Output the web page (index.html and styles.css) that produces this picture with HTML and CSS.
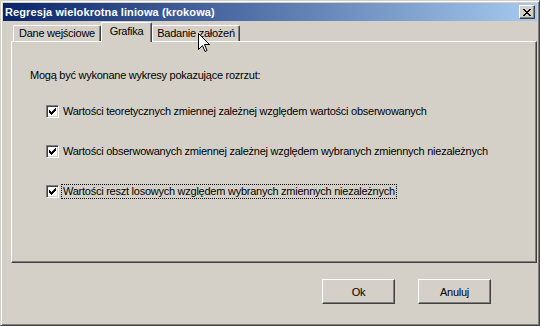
FILE: index.html
```html
<!DOCTYPE html>
<html lang="pl">
<head>
  <meta charset="UTF-8">
  <title>Regresja wielokrotna liniowa (krokowa)</title>
  <link rel="stylesheet" href="styles.css">
</head>
<body>
  <div class="window">
    <div class="titlebar">
      <span class="title">Regresja wielokrotna liniowa (krokowa)</span>
      <button class="close" aria-label="Zamknij">
        <svg width="8" height="7" viewBox="0 0 8 7" shape-rendering="crispEdges">
          <path d="M0 0h2v1h-2zM6 0h2v1h-2zM1 1h2v1h-2zM5 1h2v1h-2zM2 2h4v1h-4zM3 3h2v1h-2zM2 4h4v1h-4zM1 5h2v1h-2zM5 5h2v1h-2zM0 6h2v1h-2zM6 6h2v1h-2z" fill="#000"/>
        </svg>
      </button>
    </div>

    <div class="tabs">
      <div class="tab tab-wide">Dane wejściowe</div>
      <div class="tab tab-active">Grafika</div>
      <div class="tab tab-wide">Badanie założeń</div>
    </div>

    <div class="panel">
      <p class="intro">Mogą być wykonane wykresy pokazujące rozrzut:</p>
      <div class="options">
        <label class="option">
          <span class="check"><svg width="9" height="9" viewBox="0 0 9 9" shape-rendering="crispEdges"><path d="M1 3h1v3h-1zM2 4h1v3h-1zM3 5h1v3h-1zM4 4h1v3h-1zM5 3h1v3h-1zM6 2h1v3h-1zM7 1h1v3h-1z" fill="#000"/></svg></span>
          <span class="label">Wartości teoretycznych zmiennej zależnej względem wartości obserwowanych</span>
        </label>
        <label class="option">
          <span class="check"><svg width="9" height="9" viewBox="0 0 9 9" shape-rendering="crispEdges"><path d="M1 3h1v3h-1zM2 4h1v3h-1zM3 5h1v3h-1zM4 4h1v3h-1zM5 3h1v3h-1zM6 2h1v3h-1zM7 1h1v3h-1z" fill="#000"/></svg></span>
          <span class="label">Wartości obserwowanych zmiennej zależnej względem wybranych zmiennych niezależnych</span>
        </label>
        <label class="option">
          <span class="check"><svg width="9" height="9" viewBox="0 0 9 9" shape-rendering="crispEdges"><path d="M1 3h1v3h-1zM2 4h1v3h-1zM3 5h1v3h-1zM4 4h1v3h-1zM5 3h1v3h-1zM6 2h1v3h-1zM7 1h1v3h-1z" fill="#000"/></svg></span>
          <span class="label focused">Wartości reszt losowych względem wybranych zmiennych niezależnych</span>
        </label>
      </div>
    </div>

    <div class="footer">
      <button class="btn">Ok</button>
      <button class="btn">Anuluj</button>
    </div>

    <svg class="cursor" width="12" height="20" viewBox="0 0 12 20">
      <path d="M0.5 0.5V16.5L4.5 12.5L7 18.5L9 17.5L6.5 11.5H11.5Z" fill="#fff" stroke="#000" stroke-width="1"/>
    </svg>
  </div>
</body>
</html>
```

FILE: styles.css
```css
body {
  margin: 0;
  background: #d4d0c8;
  font-family: "Liberation Sans", Arial, sans-serif;
  font-size: 11px;
  letter-spacing: -0.25px;
  color: #000;
}

.window {
  position: relative;
  box-sizing: border-box;
  width: 540px;
  height: 326px;
  padding: 2px;
  background: #d4d0c8;
  border: 1px solid;
  border-color: #d4d0c8 #404040 #404040 #d4d0c8;
  box-shadow: inset 1px 1px #fff, inset -1px -1px #808080;
  overflow: hidden;
}

.titlebar {
  display: flex;
  align-items: center;
  justify-content: space-between;
  height: 18px;
  padding: 0 2px 0 2px;
  background: linear-gradient(to right, #0a246a, #a6caf0);
  color: #fff;
  font-weight: bold;
  font-size: 11px;
  letter-spacing: 0.1px;
}

.close {
  display: flex;
  align-items: center;
  justify-content: center;
  box-sizing: border-box;
  width: 16px;
  height: 14px;
  padding: 0;
  background: #d4d0c8;
  border: 1px solid;
  border-color: #fff #404040 #404040 #fff;
  box-shadow: inset -1px -1px #808080;
}

.tabs {
  display: flex;
  align-items: flex-end;
  height: 19px;
  margin: 1px 0 0 8px;
  padding-left: 2px;
}

.tab {
  box-sizing: border-box;
  height: 16px;
  line-height: 14px;
  text-align: center;
  border: 1px solid;
  border-bottom: none;
  border-color: #fff #404040 #fff #fff;
  border-radius: 2px 2px 0 0;
  box-shadow: inset -1px 0 #808080;
}

.tab-wide {
  width: 88px;
}

.tab-active {
  position: relative;
  z-index: 1;
  width: 51px;
  height: 20px;
  margin-bottom: -1px;
  line-height: 16px;
  background: #d4d0c8;
}

.panel {
  box-sizing: border-box;
  height: 222px;
  margin-left: 8px;
  padding: 26px 0 0 18px;
  border: 1px solid;
  border-color: #fff #404040 #404040 #fff;
  box-shadow: inset -1px -1px #808080;
}

.intro {
  margin: 0;
  line-height: 14px;
}

.options {
  display: flex;
  flex-direction: column;
  gap: 25px;
  margin-top: 22px;
  padding-left: 16px;
}

.option {
  display: flex;
  align-items: center;
  height: 15px;
}

.check {
  display: flex;
  align-items: center;
  justify-content: center;
  box-sizing: border-box;
  width: 13px;
  height: 13px;
  background: #fff;
  border: 1px solid;
  border-color: #808080 #fff #fff #808080;
  box-shadow: inset 1px 1px #404040, inset -1px -1px #d4d0c8;
}

.check svg {
  display: block;
}

.label {
  margin-left: 2px;
  padding: 0 1px 0 1px;
  line-height: 13px;
  border: 1px solid transparent;
}

.label.focused {
  border: 1px dotted #000;
}

.footer {
  display: flex;
  justify-content: flex-end;
  gap: 23px;
  padding: 16px 46px 0 0;
}

.btn {
  box-sizing: border-box;
  width: 73px;
  height: 25px;
  padding: 0;
  font-family: inherit;
  font-size: 11px;
  letter-spacing: inherit;
  color: #000;
  background: #d4d0c8;
  border: 1px solid;
  border-color: #fff #404040 #404040 #fff;
  box-shadow: inset -1px -1px #808080;
}

.cursor {
  position: absolute;
  left: 197px;
  top: 32px;
}
```
